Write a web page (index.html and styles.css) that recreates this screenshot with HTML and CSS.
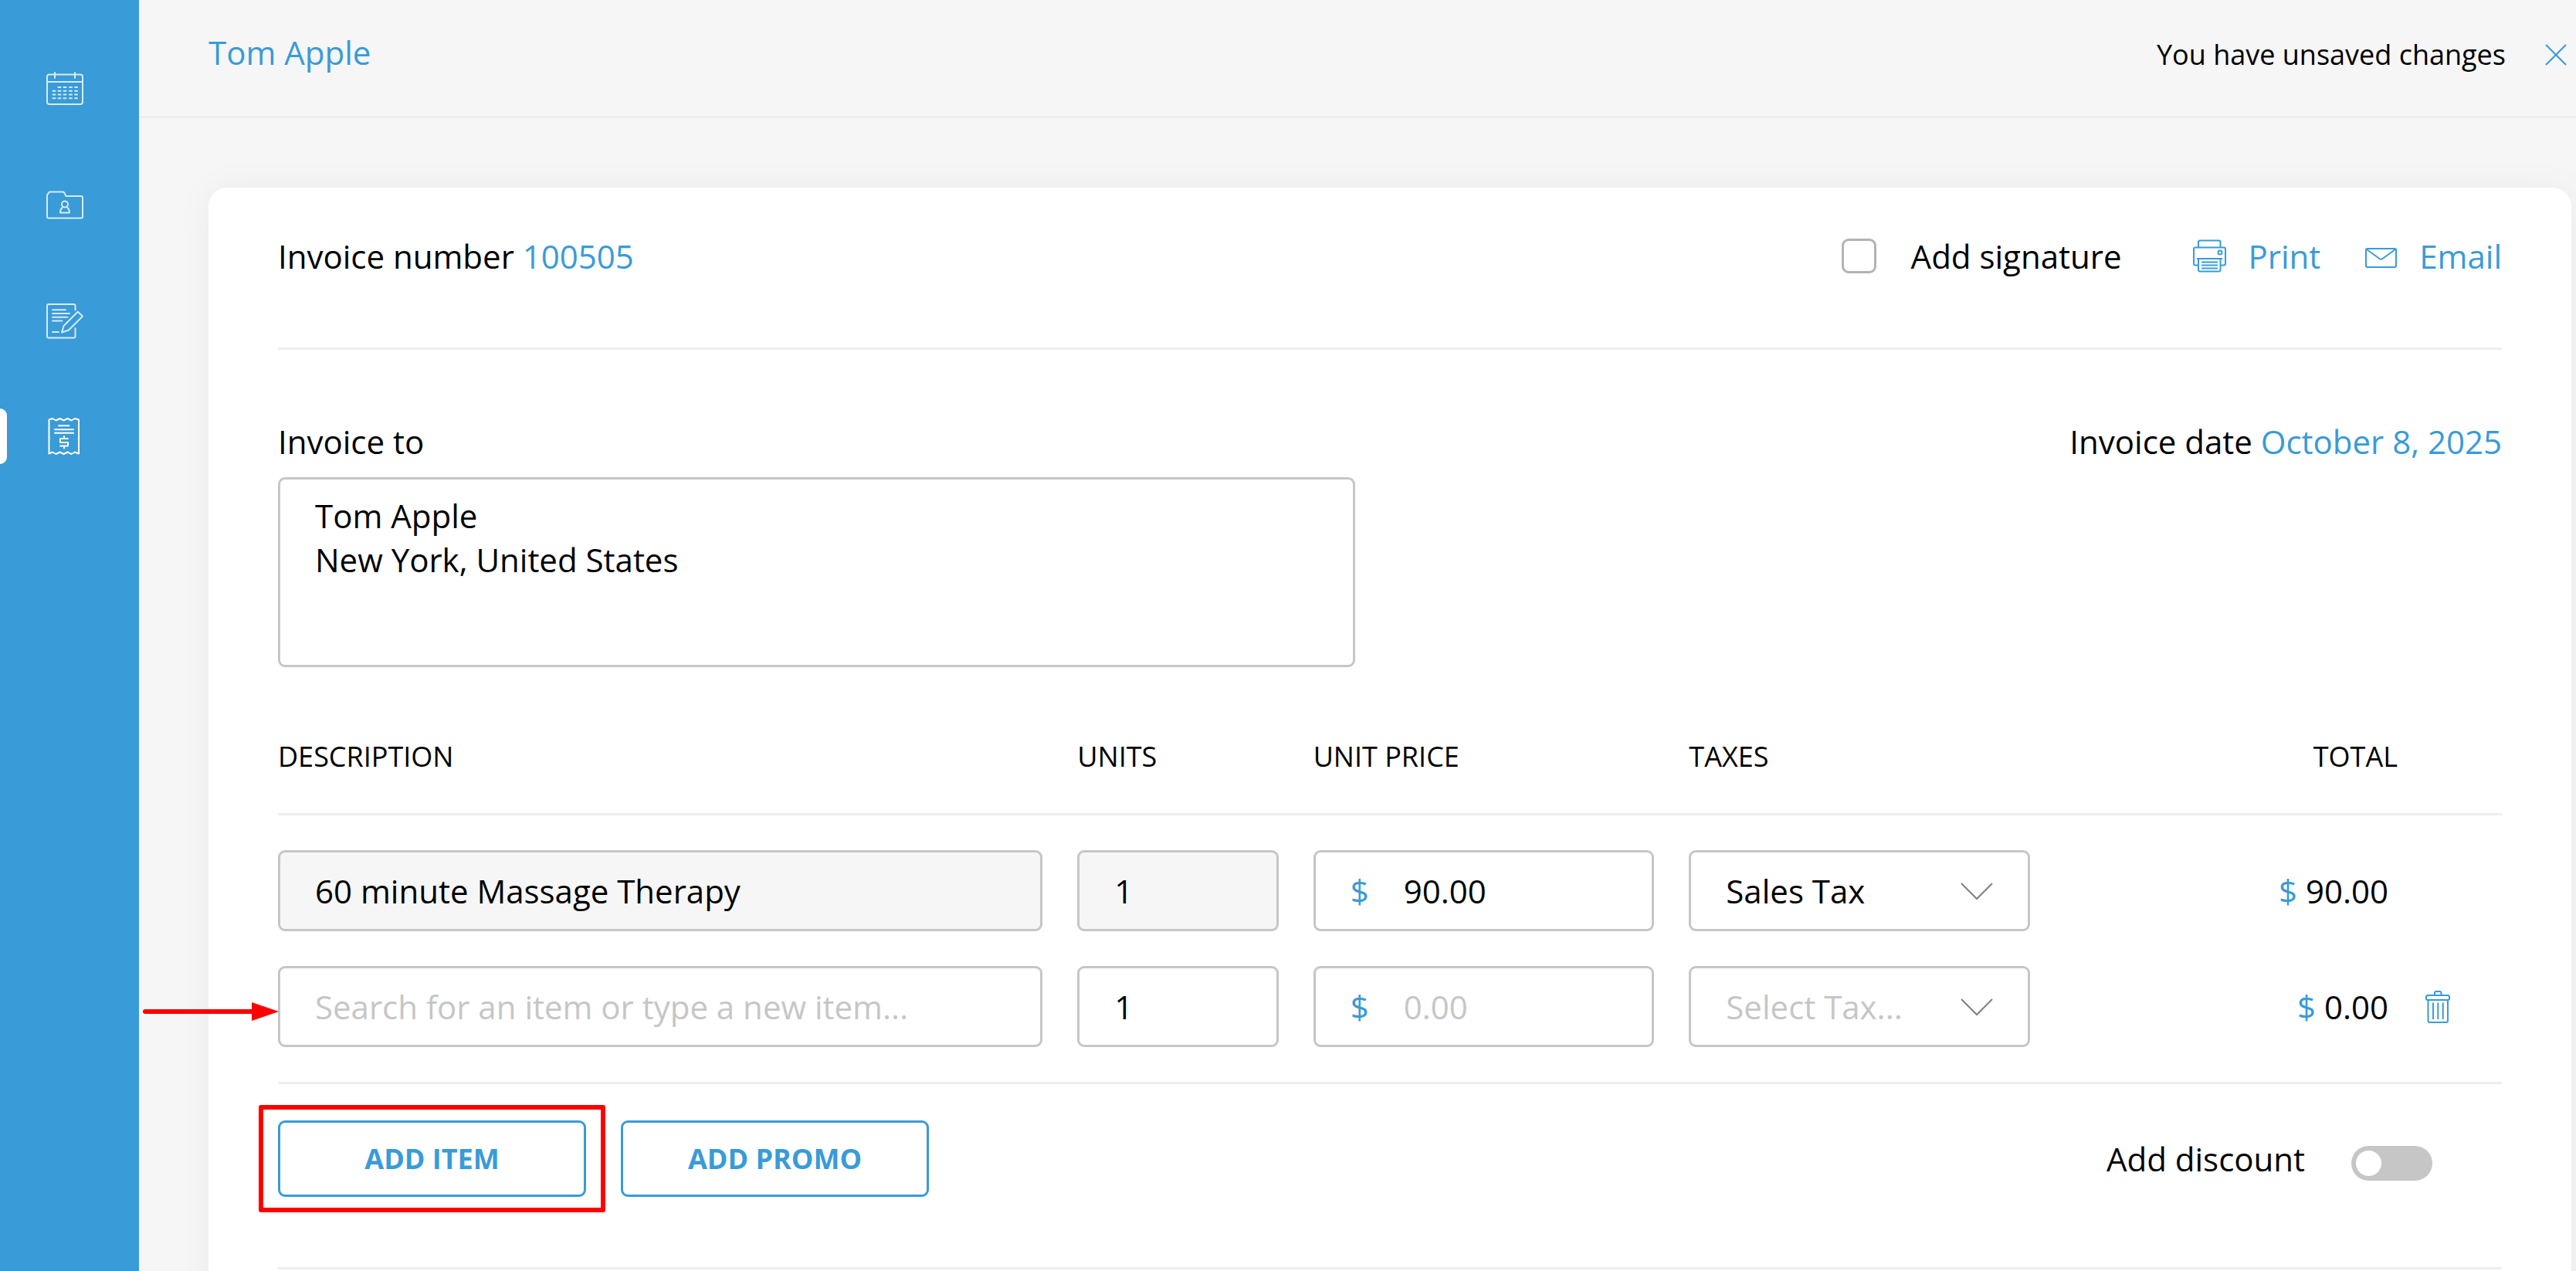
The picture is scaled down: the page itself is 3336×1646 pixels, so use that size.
FILE: index.html
```html
<!DOCTYPE html>
<html lang="en">
<head>
<meta charset="UTF-8">
<meta name="viewport" content="width=device-width, initial-scale=1.0">
<title>Invoice 100505</title>
<link rel="stylesheet" href="styles.css">
</head>
<body>
<nav class="sidebar">
    <a class="nav-link" href="#" aria-label="Calendar">
        <svg class="nav-icon" viewBox="0 0 48 48">
            <rect x="1" y="5.500" width="46" height="38.500" rx="3"/>
            <path d="M1 15h46M11 3v7M37 3v7"/>
            <path d="M15.500 22h3M22.500 22h3M30 22h3M37 22h3M8.500 26.800h3M15.500 26.800h3M22.500 26.800h3M30 26.800h3M37 26.800h3M8.500 31.500h3M15.500 31.500h3M22.500 31.500h3M30 31.500h3M37 31.500h3M8.500 36.200h3M15.500 36.200h3M22.500 36.200h3M30 36.200h3M37 36.200h3"/>
        </svg>
    </a>
    <a class="nav-link" href="#" aria-label="Clients">
        <svg class="nav-icon" viewBox="0 0 48 48">
            <path d="M1 12L3 8.500Q3.500 7.500 4.500 7.500H21.500Q22.500 7.500 23.200 8.500L25.500 13H45Q47 13 47 15V39.500Q47 41.500 45 41.500H3Q1 41.500 1 39.500Z"/>
            <circle cx="24" cy="23.500" r="4"/>
            <path d="M21 27.500Q18 30 18 34.500H30Q30 30 27 27.500"/>
        </svg>
    </a>
    <a class="nav-link" href="#" aria-label="Notes">
        <svg class="nav-icon" viewBox="0 0 48 48">
            <path d="M37.500 10.500V5Q37.500 3 35.500 3H3Q1 3 1 5V44.500Q1 46.500 3 46.500H35.500Q37.500 46.500 37.500 44.500V34"/>
            <path d="M8 10.200h17M8 15h22M8 19.800h19.500M8 24.500h12.500M8 39h8"/>
            <path d="M40.700 12.800L47 18.500L29 36.500L20 39.500L22.500 31Z"/>
        </svg>
    </a>
    <a class="nav-link active" href="#" aria-label="Invoices">
        <svg class="nav-icon" viewBox="0 0 48 48">
            <path d="M3.500 2.500L8 1L12.500 3.500L17.500 1L22.500 3.500L27.500 1L32.500 3.500L37 1L42 2.500V46.500L37 44.500L32.500 47L27.500 44.500L22.500 47L17.500 44.500L12.500 47L8 44.500L3.500 46.500Z"/>
            <path d="M16 10.200h13.500M11 15.200h24M11 19.800h24"/>
            <path d="M28 27H18V32H28V36.500H18M23 24v3M23 36.500v3"/>
        </svg>
    </a>
</nav>
<div class="page">
    <header class="topbar">
        <a class="client-name" href="#">Tom Apple</a>
        <div class="unsaved">
            <span>You have unsaved changes</span>
            <button class="icon-button" type="button" aria-label="Close">
                <svg class="close-icon" viewBox="0 0 28 28"><path d="M1 1L27 27M27 1L1 27"/></svg>
            </button>
        </div>
    </header>
    <main class="invoice">
        <div class="invoice-head">
            <div>Invoice number <a href="#">100505</a></div>
            <div class="actions">
                <label class="signature"><input class="checkbox" type="checkbox">Add signature</label>
                <a class="action" href="#">
                    <svg class="action-icon" viewBox="0 0 44 44">
                        <path d="M7 10V3.500Q7 1.500 9 1.500H33.500Q35.500 1.500 35.500 3.500V10"/>
                        <path d="M7 33.500H3Q1 33.500 1 31.500V12.500Q1 10.500 3 10.500H40Q42 10.500 42 12.500V31.500Q42 33.500 40 33.500H36"/>
                        <path d="M5 25H38M7 25V39.500Q7 41.500 9 41.500H33.500Q35.500 41.500 35.500 39.500V25M11 29.500H32M11 33.500H32M11 37.500H32"/>
                        <circle cx="35" cy="17" r="2.500"/>
                    </svg>
                    Print
                </a>
                <a class="action" href="#">
                    <svg class="action-icon" viewBox="0 0 44 44">
                        <rect x="2" y="12" width="39" height="24" rx="2"/>
                        <path d="M3 13L19.500 25Q21.500 26.500 23.500 25L40 13"/>
                    </svg>
                    Email
                </a>
            </div>
        </div>
        <div class="invoice-to">
            <div class="invoice-labels">
                <label for="address">Invoice to</label>
                <div>Invoice date <a href="#">October 8, 2025</a></div>
            </div>
            <textarea class="field address" id="address">Tom Apple
New York, United States</textarea>
        </div>
        <table class="items">
            <thead>
                <tr>
                    <th class="col-description">Description</th>
                    <th class="col-units">Units</th>
                    <th class="col-price">Unit price</th>
                    <th class="col-taxes">Taxes</th>
                    <th class="col-total">Total</th>
                </tr>
            </thead>
            <tbody>
                <tr>
                    <td><input class="field" type="text" value="60 minute Massage Therapy" aria-label="Description" readonly></td>
                    <td><input class="field" type="text" value="1" aria-label="Units" readonly></td>
                    <td>
                        <label class="field price"><span class="currency">$</span><input type="text" value="90.00" aria-label="Unit price"></label>
                    </td>
                    <td>
                        <div class="select-wrap">
                            <select class="field" aria-label="Taxes"><option>Sales Tax</option></select>
                            <svg class="chevron" viewBox="0 0 42 24"><path d="M1 1L21 21L41 1"/></svg>
                        </div>
                    </td>
                    <td>
                        <div class="total"><span><span class="currency">$</span> 90.00</span></div>
                    </td>
                </tr>
                <tr>
                    <td><input class="field" type="text" placeholder="Search for an item or type a new item..." aria-label="Description"></td>
                    <td><input class="field" type="text" value="1" aria-label="Units"></td>
                    <td>
                        <label class="field price"><span class="currency">$</span><input type="text" placeholder="0.00" aria-label="Unit price"></label>
                    </td>
                    <td>
                        <div class="select-wrap">
                            <select class="field empty" aria-label="Taxes"><option>Select Tax...</option></select>
                            <svg class="chevron" viewBox="0 0 42 24"><path d="M1 1L21 21L41 1"/></svg>
                        </div>
                    </td>
                    <td>
                        <div class="total">
                            <span><span class="currency">$</span> 0.00</span>
                            <button class="icon-button delete" type="button" aria-label="Delete item">
                                <svg class="trash-icon" viewBox="0 0 34 44">
                                    <path d="M13 6V3Q13 1 15 1H19.500Q21.500 1 21.500 3V6"/>
                                    <rect x="2" y="6" width="30" height="6" rx="2"/>
                                    <path d="M4.500 12V39Q4.500 41 6.500 41H28Q30 41 30 39V12M11 15.500V37M17.300 15.500V37M23.700 15.500V37"/>
                                </svg>
                            </button>
                        </div>
                    </td>
                </tr>
            </tbody>
        </table>
        <div class="invoice-foot">
            <div class="buttons">
                <div class="highlight"><button class="button" type="button">Add item</button></div>
                <button class="button" type="button">Add promo</button>
            </div>
            <label class="discount">Add discount<input class="switch" type="checkbox" role="switch"></label>
        </div>
        <!-- pointer to the new item row -->
        <svg class="arrow" viewBox="0 0 176 24"><path d="M3 12H144" stroke="#f00" stroke-width="6" stroke-linecap="round"/><path d="M141 0L176 12L141 24Z" fill="#f00"/></svg>
    </main>
</div>
</body>
</html>
```
FILE: styles.css
```css
* {
    box-sizing: border-box;
}
body {
    margin: 0;
    display: flex;
    height: 100vh;
    overflow: hidden;
    background-color: #f6f6f6;
    color: #000;
    font-family: "Open Sans", sans-serif;
    font-size: 42px;
    line-height: 57px;
}
a {
    color: #399bd7;
    text-decoration: none;
}
input, textarea, select, button {
    font: inherit;
    color: inherit;
}
svg {
    display: block;
    fill: none;
    stroke: #399bd7;
    stroke-width: 2;
}
.sidebar {
    flex: none;
    width: 180px;
    padding-top: 40px;
    background-color: #399bd7;
}
.nav-link {
    position: relative;
    display: flex;
    align-items: center;
    height: 150px;
    padding-left: 60px;
}
.nav-link.active::before {
    content: "";
    position: absolute;
    left: 0;
    width: 9px;
    height: 72px;
    border-radius: 0 9px 9px 0;
    background-color: #fff;
}
.nav-icon {
    width: 48px;
    height: 48px;
    stroke: #fff;
    stroke-linecap: round;
    stroke-linejoin: round;
    opacity: 0.8;
}
.active .nav-icon {
    opacity: 1;
}
.page {
    flex: 1;
    min-width: 0;
}
.topbar {
    display: flex;
    justify-content: space-between;
    align-items: baseline;
    height: 153px;
    padding: 39px 12px 0 90px;
    border-bottom: 3px solid #ededed;
}
.unsaved {
    display: flex;
    align-items: center;
    gap: 51px;
    font-size: 36px;
}
.icon-button {
    padding: 0;
    border: none;
    background: none;
    cursor: pointer;
}
.close-icon {
    width: 28px;
    height: 28px;
}
.invoice {
    position: relative;
    margin: 90px 6px 0 90px;
    padding: 0 90px 90px;
    border-radius: 24px;
    background-color: #fff;
    box-shadow: 0 0 45px rgba(0, 0, 0, 0.05);
}
.invoice-head {
    display: flex;
    justify-content: space-between;
    padding: 60px 0 90px;
    border-bottom: 3px solid #ededed;
}
.actions {
    display: flex;
    gap: 57px;
}
.signature {
    display: flex;
    align-items: center;
    gap: 45px;
    margin-right: 36px;
}
.checkbox {
    appearance: none;
    width: 45px;
    height: 45px;
    margin: 0;
    border: 3px solid #b3b3b3;
    border-radius: 9px;
}
.action {
    display: flex;
    align-items: center;
    gap: 27px;
}
.action-icon {
    width: 44px;
    height: 44px;
}
.invoice-to {
    padding: 90px 0;
}
.invoice-labels {
    display: flex;
    justify-content: space-between;
    margin-bottom: 18px;
}
.field {
    display: block;
    width: 100%;
    height: 105px;
    padding: 0 45px;
    border: 3px solid #c6c6c6;
    border-radius: 9px;
    background-color: #fff;
    outline: none;
}
.field[readonly] {
    background-color: #f6f6f6;
}
.field.address {
    width: 1395px;
    height: 246px;
    padding: 18px 45px;
    resize: none;
}
::placeholder,
.field.empty {
    color: #c6c6c6;
}
.items {
    width: 100%;
    table-layout: fixed;
    border-collapse: separate;
    border-spacing: 0;
    border-bottom: 3px solid #ededed;
}
.items th {
    padding: 0 0 48px;
    border-bottom: 3px solid #ededed;
    font-size: 36px;
    line-height: 51px;
    font-weight: 400;
    text-align: left;
    text-transform: uppercase;
}
.items td {
    padding: 45px 45px 0 0;
}
.items tr:last-child td {
    padding-bottom: 45px;
}
.items td:last-child {
    padding-right: 0;
}
.col-description {
    width: 35.95%;
}
.col-units {
    width: 10.6%;
}
.col-price,
.col-taxes {
    width: 16.9%;
}
.items .col-total {
    padding-right: 135px;
    text-align: right;
}
.price {
    display: flex;
    align-items: center;
    gap: 45px;
}
.price input {
    width: 100%;
    min-width: 0;
    padding: 0;
    border: none;
    outline: none;
    background: none;
}
.currency {
    color: #399bd7;
}
.select-wrap {
    position: relative;
}
.select-wrap select {
    appearance: none;
}
.chevron {
    position: absolute;
    top: 42px;
    right: 48px;
    width: 42px;
    height: 24px;
    stroke: #808080;
    pointer-events: none;
}
.total {
    position: relative;
    padding-right: 147px;
    text-align: right;
}
.delete {
    position: absolute;
    top: 8px;
    right: 66px;
}
.trash-icon {
    width: 34px;
    height: 44px;
}
.invoice-foot {
    display: flex;
    justify-content: space-between;
    align-items: center;
    padding: 47px 90px 91px 0;
    border-bottom: 3px solid #ededed;
}
.buttons {
    display: flex;
    gap: 45px;
}
.button {
    display: block;
    width: 399px;
    height: 99px;
    padding: 0;
    border: 3px solid #399bd7;
    border-radius: 9px;
    background-color: #fff;
    color: #399bd7;
    font-size: 36px;
    font-weight: 700;
    text-transform: uppercase;
    cursor: pointer;
}
.highlight {
    position: relative;
}
.highlight::after {
    content: "";
    position: absolute;
    top: -20px;
    right: -25px;
    bottom: -20px;
    left: -25px;
    border: 6px solid #f00;
    border-radius: 3px;
    pointer-events: none;
}
.discount {
    display: flex;
    align-items: flex-end;
    gap: 60px;
}
.switch {
    appearance: none;
    width: 105px;
    height: 45px;
    margin: 0;
    padding: 6px;
    border-radius: 24px;
    background-color: #c6c6c6;
}
.switch::before {
    content: "";
    display: block;
    width: 33px;
    height: 33px;
    border-radius: 50%;
    background-color: #fff;
}
.arrow {
    position: absolute;
    top: 1055px;
    left: -85px;
    width: 176px;
    height: 24px;
    stroke: none;
}
```
